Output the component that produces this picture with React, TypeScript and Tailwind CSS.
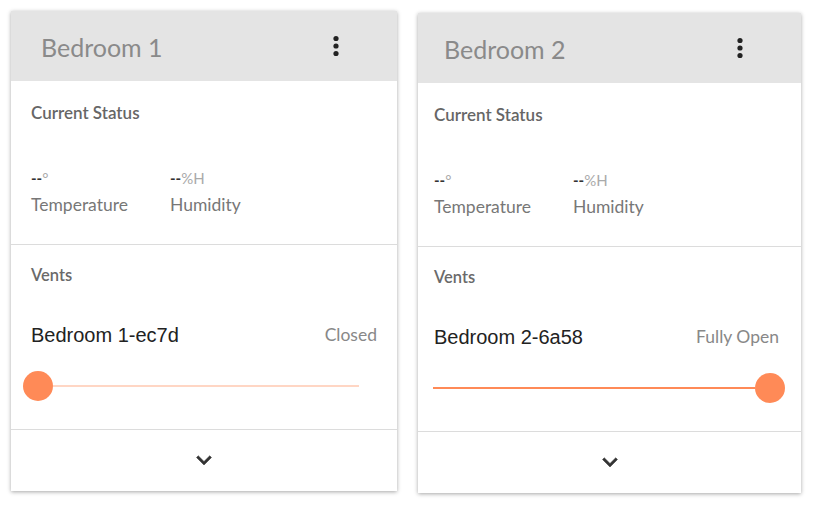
import React from "react";

type Room = {
  name: string;
  vent: string;
  status: string;
  open: boolean;
  width: string;
  inset: string;
  top: string;
};

const rooms: Room[] = [
  { name: "Bedroom 1", vent: "Bedroom 1-ec7d", status: "Closed", open: false, width: "w-[386px]", inset: "px-[20px]", top: "mt-0" },
  { name: "Bedroom 2", vent: "Bedroom 2-6a58", status: "Fully Open", open: true, width: "w-[383px]", inset: "pl-[16px] pr-[22px]", top: "mt-[2px]" },
];

const MoreVert = () => (
  <svg width="10" height="24" viewBox="0 0 10 24" fill="#222">
    <circle cx="5" cy="4.5" r="2.6" />
    <circle cx="5" cy="12" r="2.6" />
    <circle cx="5" cy="19.5" r="2.6" />
  </svg>
);

const ExpandMore = () => (
  <svg width="30" height="30" viewBox="0 0 24 24" fill="#333" stroke="#333" strokeWidth="0.4">
    <path d="M16.59 8.59L12 13.17 7.41 8.59 6 10l6 6 6-6z" />
  </svg>
);

const RoomCard: React.FC<{ room: Room }> = ({ room }) => {
  return (
    <div className={`${room.width} ${room.top} bg-white shadow-[0_1px_4px_rgba(0,0,0,0.35)] flex flex-col`}>
      <div className={`h-[70px] bg-[#e4e4e4] flex items-center justify-between ${room.inset} pr-[56px]`}>
        <span className="text-[25px] text-[#8a8a8a] pl-[10px] pt-[3px]">{room.name}</span>
        <MoreVert />
      </div>

      <div className={`${room.inset} pt-[22px] pb-[29px] border-b border-[#dcdcdc]`}>
        <div className="text-[17px] leading-[20px] font-semibold text-[#666]">Current Status</div>
        <div className="flex mt-[45px]">
          <div className="w-[139px]">
            <div className="text-[15px] leading-[20px]">
              <span className="font-bold text-[#333]">--</span>
              <span className="text-[#aaa]">°</span>
            </div>
            <div className="text-[17.5px] leading-[20px] text-[#777] mt-[7px]">Temperature</div>
          </div>
          <div>
            <div className="text-[15px] leading-[20px]">
              <span className="font-bold text-[#333]">--</span>
              <span className="text-[#aaa]">%H</span>
            </div>
            <div className="text-[17.5px] leading-[20px] text-[#777] mt-[7px]">Humidity</div>
          </div>
        </div>
      </div>

      <div className="pt-[20px] pb-[28px] border-b border-[#dcdcdc]">
        <div className={`${room.inset} text-[16.5px] leading-[20px] font-semibold text-[#6a6a6a]`}>Vents</div>
        <div className={`${room.inset} flex items-center justify-between mt-[38px] h-[24px]`}>
          <span className="font-['Liberation_Sans',Arial,sans-serif] text-[20px] text-[#222]">{room.vent}</span>
          <span className="text-[17.5px] text-[#888]">{room.status}</span>
        </div>
        {room.open ? (
          <div className="flex items-center mt-[24px] pl-[15px] h-[30px]">
            <div className="w-[322px] h-[2px] bg-[#ff8a57]" />
            <div className="w-[30px] h-[30px] rounded-full bg-[#ff8a57]" />
          </div>
        ) : (
          <div className="flex items-center mt-[24px] pl-[12px] h-[30px]">
            <div className="w-[30px] h-[30px] rounded-full bg-[#ff8a57]" />
            <div className="w-[306px] h-[2px] bg-[#ffd6c4]" />
          </div>
        )}
      </div>

      <div className="h-[61px] flex items-center justify-center pb-[2px]">
        <ExpandMore />
      </div>
    </div>
  );
};

export default function App() {
  return (
    <div className="w-[815px] h-[505px] bg-white font-['Lato',sans-serif] flex items-start gap-[21px] pl-[11px] pt-[11px]">
      {rooms.map(r => (
        <RoomCard key={r.name} room={r} />
      ))}
    </div>
  );
}
